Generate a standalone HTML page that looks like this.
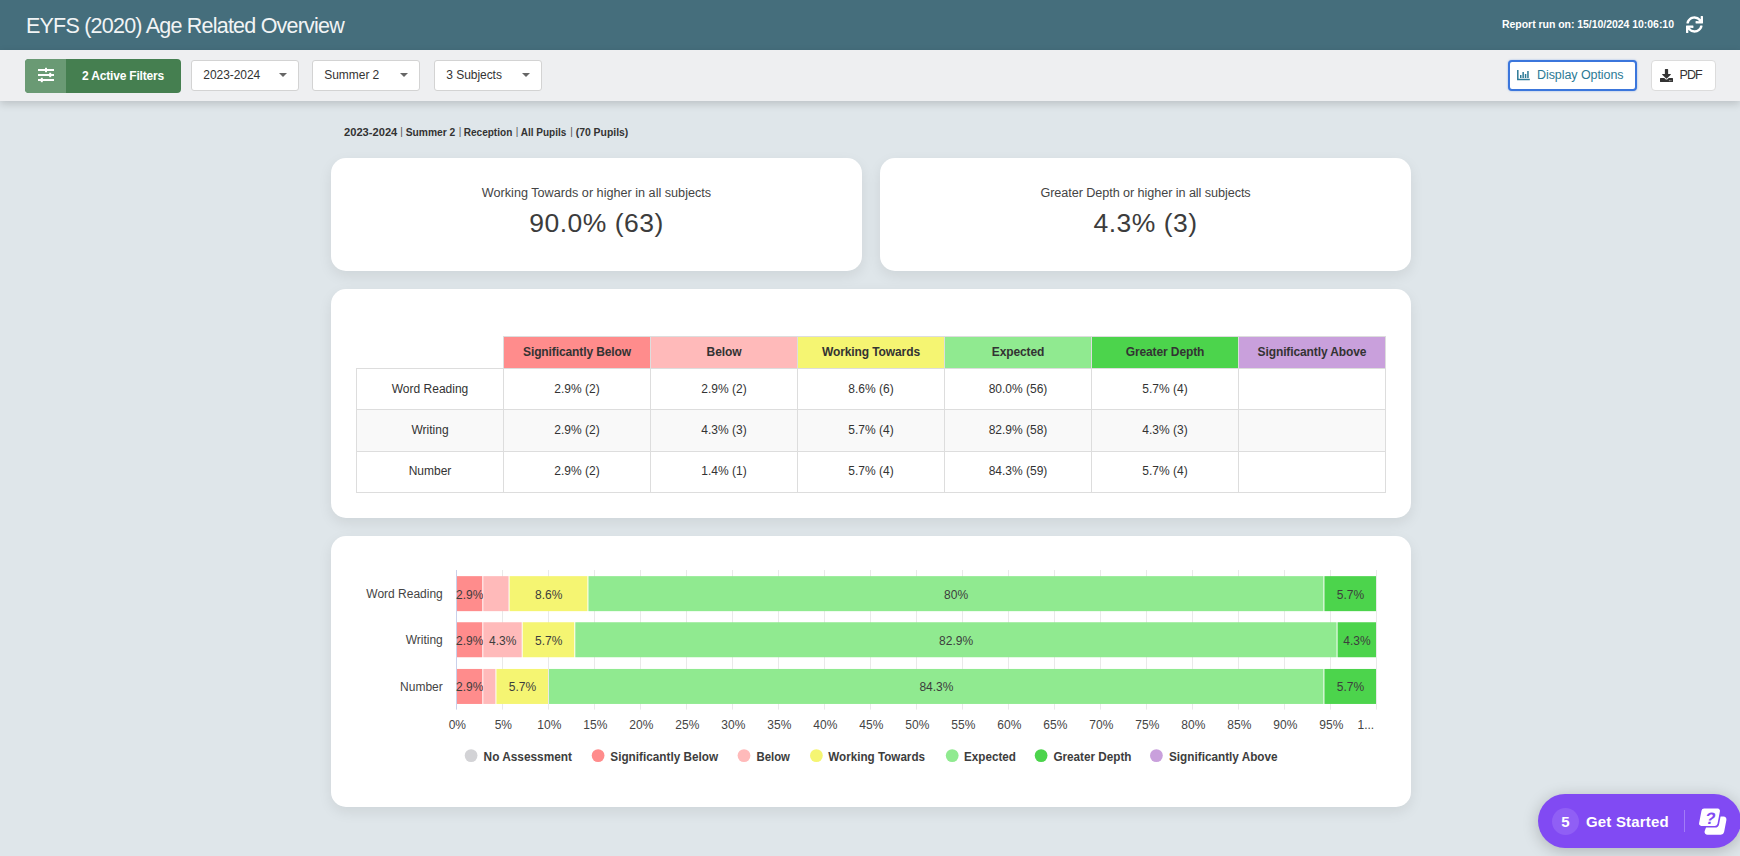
<!DOCTYPE html>
<html lang="en">
<head>
<meta charset="utf-8">
<title>EYFS (2020) Age Related Overview</title>
<style>
*{box-sizing:border-box;margin:0;padding:0}
html,body{width:1740px;height:856px;overflow:hidden}
body{background:#dfe6ea;font-family:"Liberation Sans",sans-serif;color:#333;position:relative}
.abs{position:absolute}
#hdr{position:absolute;left:0;top:0;width:1740px;height:50px;background:#456e7c}
#title{position:absolute;left:26px;top:12px;font-size:21.5px;letter-spacing:-.78px;line-height:28px;color:#fff;white-space:nowrap;font-weight:400;opacity:.93}
#runon{position:absolute;left:1502px;top:17px;font-size:10.5px;letter-spacing:-.04px;line-height:14px;color:#fff;font-weight:700;white-space:nowrap}
#refresh{position:absolute;left:1686px;top:16px;width:17px;height:17px}
#bar{position:absolute;left:0;top:50px;width:1740px;height:51px;background:#eeeff1;box-shadow:0 3px 8px rgba(0,0,0,.16)}
#filt{position:absolute;left:25px;top:59px;width:156px;height:34px;border-radius:4px;background:#457f50;overflow:hidden}
#filt .ic{position:absolute;left:0;top:0;width:41px;height:34px;background:#6a9a74}
#filt .tx{position:absolute;left:57px;top:9px;font-size:12px;letter-spacing:-.18px;line-height:16px;font-weight:700;color:#fff;white-space:nowrap}
.dd{position:absolute;top:60px;width:108px;height:31px;background:#fff;border:1px solid #d3d3d3;border-radius:3px}
.dd span{position:absolute;left:11.3px;top:7px;font-size:12px;letter-spacing:-.05px;line-height:15px;color:#333;white-space:nowrap}
.dd i{position:absolute;left:87px;top:12px;width:0;height:0;border-left:4px solid transparent;border-right:4px solid transparent;border-top:4px solid #666}
#dopt{position:absolute;left:1508px;top:60px;width:129px;height:31px;background:#fff;border:2px solid #3b76dc;border-radius:4px;box-shadow:0 0 2px rgba(59,118,220,.55)}
#dopt span{position:absolute;left:27px;top:6px;font-size:12.5px;letter-spacing:-.07px;line-height:15px;color:#2c7a96;white-space:nowrap}
#pdf{position:absolute;left:1651px;top:60px;width:65px;height:31px;background:#fff;border:1px solid #dcdcdc;border-radius:4px}
#pdf span{position:absolute;left:27.5px;top:7px;font-size:12.5px;letter-spacing:-.9px;line-height:15px;color:#333;white-space:nowrap}
#crumb{position:absolute;left:344px;top:125px;font-size:11px;line-height:14px;font-weight:700;color:#333;white-space:nowrap}
#crumb b{font-weight:400;color:#555}
.card{position:absolute;background:#fff;border-radius:15px;box-shadow:0 5px 14px rgba(0,0,0,.08)}
.kpi .l{position:absolute;left:0;width:100%;top:27px;text-align:center;font-size:12.65px;line-height:16px;color:#444}
.kpi .v{position:absolute;left:0;width:100%;top:46px;text-align:center;font-size:26.5px;letter-spacing:.49px;line-height:38px;color:#3c3c3c}
table{position:absolute;left:356px;top:336px;border-collapse:collapse;table-layout:fixed;width:1029px}
td,th{border:1px solid #ddd;text-align:center;font-size:12px;color:#333;padding:0;width:147px}
th{height:32px;font-weight:700;font-size:12px;letter-spacing:-.11px;padding-bottom:2px}
td{height:41px}
tr.alt td{background:#f9f9f9}
tr.r2 td,tr.r3 td{padding-bottom:2px}
th.e{border:none;background:transparent}
</style>
</head>
<body>
<div id="hdr"></div>
<div id="title">EYFS (2020) Age Related Overview</div>
<div id="runon">Report run on: 15/10/2024 10:06:10</div>
<svg id="refresh" viewBox="0 0 512 512"><path fill="#fff" d="M440.65 12.570l4 82.770A247.160 247.160 0 0 0 255.830 8C134.730 8 33.910 94.920 12.290 209.820A12 12 0 0 0 24.090 224h49.050a12 12 0 0 0 11.670-9.260 175.910 175.910 0 0 1 317-56.940l-101.460-4.860a12 12 0 0 0-12.570 12v47.410a12 12 0 0 0 12 12H500a12 12 0 0 0 12-12V12a12 12 0 0 0-12-12h-47.370a12 12 0 0 0-11.980 12.570zM255.830 432a175.610 175.610 0 0 1-146-77.800l101.800 4.870a12 12 0 0 0 12.570-12v-47.400a12 12 0 0 0-12-12H12a12 12 0 0 0-12 12V500a12 12 0 0 0 12 12h47.350a12 12 0 0 0 12-12.600l-4.150-82.570A247.170 247.170 0 0 0 255.830 504c121.110 0 221.930-86.920 243.550-201.820a12 12 0 0 0-11.800-14.180h-49.050a12 12 0 0 0-11.670 9.260A175.860 175.860 0 0 1 255.830 432z"/></svg>
<div id="bar"></div>
<div id="filt"><div class="ic"><svg width="41" height="34" viewBox="0 0 41 34"><g stroke="#fff" stroke-width="2" fill="none"><path d="M13 11h16M13 16h16M13 21h16"/></g><g fill="#fff"><rect x="20" y="8.800" width="2" height="4.400"/><rect x="24.200" y="13.800" width="2" height="4.400"/><rect x="15.800" y="18.800" width="2" height="4.400"/></g></svg></div><div class="tx">2 Active Filters</div></div>
<div class="dd" style="left:191px"><span>2023-2024</span><i></i></div>
<div class="dd" style="left:312px"><span>Summer 2</span><i></i></div>
<div class="dd" style="left:434px"><span>3 Subjects</span><i></i></div>
<div id="dopt"><svg class="abs" style="left:7px;top:8px" width="13" height="11" viewBox="0 0 13 11"><path d="M.8 0v9.6h12" stroke="#2c7a96" stroke-width="1.5" fill="none"/><g fill="#2c7a96"><rect x="3" y="5" width="1.5" height="3"/><rect x="5.4" y="2" width="1.5" height="6"/><rect x="7.8" y="4" width="1.5" height="4"/><rect x="10.2" y="1" width="1.5" height="7"/></g></svg><span>Display Options</span></div>
<div id="pdf"><svg class="abs" style="left:8px;top:8px" width="13" height="13" viewBox="0 0 512 512"><path fill="#333" d="M216 0h80c13.3 0 24 10.700 24 24v168h87.700c17.800 0 26.700 21.500 14.100 34.100L269.700 378.300c-7.500 7.500-19.800 7.500-27.300 0L90.100 226.100c-12.600-12.600-3.700-34.100 14.100-34.100H192V24c0-13.300 10.700-24 24-24zm296 376v112c0 13.300-10.700 24-24 24H24c-13.300 0-24-10.700-24-24V376c0-13.300 10.700-24 24-24h146.700l49 49c20.100 20.100 52.500 20.100 72.600 0l49-49H488c13.300 0 24 10.700 24 24zm-124 88c0-11-9-20-20-20s-20 9-20 20 9 20 20 20 20-9 20-20zm64 0c0-11-9-20-20-20s-20 9-20 20 9 20 20 20 20-9 20-20z"/></svg><span>PDF</span></div>


<div class="card kpi" style="left:331px;top:158px;width:531px;height:113px"><div class="l">Working Towards or higher in all subjects</div><div class="v">90.0% (63)</div></div>
<div class="card kpi" style="left:880px;top:158px;width:531px;height:113px"><div class="l" style="letter-spacing:-.07px">Greater Depth or higher in all subjects</div><div class="v">4.3% (3)</div></div>

<div class="card" style="left:331px;top:289px;width:1080px;height:229px"></div>
<table>
<tr><th class="e"></th><th style="background:#ff8c8c">Significantly Below</th><th style="background:#ffbaba">Below</th><th style="background:#f5f572">Working Towards</th><th style="background:#90ea90">Expected</th><th style="background:#4cd44c">Greater Depth</th><th style="background:#c9a0dc">Significantly Above</th></tr>
<tr><td>Word Reading</td><td>2.9% (2)</td><td>2.9% (2)</td><td>8.6% (6)</td><td>80.0% (56)</td><td>5.7% (4)</td><td></td></tr>
<tr class="alt r2" style="height:42px"><td>Writing</td><td>2.9% (2)</td><td>4.3% (3)</td><td>5.7% (4)</td><td>82.9% (58)</td><td>4.3% (3)</td><td></td></tr>
<tr class="r3"><td>Number</td><td>2.9% (2)</td><td>1.4% (1)</td><td>5.7% (4)</td><td>84.3% (59)</td><td>5.7% (4)</td><td></td></tr>
</table>

<div class="card" style="left:331px;top:536px;width:1080px;height:271px"></div>
<svg class="abs" style="left:0;top:0" width="1740" height="856" viewBox="0 0 1740 856" font-family="'Liberation Sans',sans-serif">
<text x="344" y="135.9" font-size="11" font-weight="700" fill="#333" textLength="53.3" lengthAdjust="spacingAndGlyphs">2023-2024</text>
<text x="405.7" y="135.9" font-size="11" font-weight="700" fill="#333" textLength="49.6" lengthAdjust="spacingAndGlyphs">Summer 2</text>
<text x="463.7" y="135.9" font-size="11" font-weight="700" fill="#333" textLength="48.6" lengthAdjust="spacingAndGlyphs">Reception</text>
<text x="520.7" y="135.9" font-size="11" font-weight="700" fill="#333" textLength="45.6" lengthAdjust="spacingAndGlyphs">All Pupils</text>
<text x="575.7" y="135.9" font-size="11" font-weight="700" fill="#333" textLength="52.6" lengthAdjust="spacingAndGlyphs">(70 Pupils)</text>
<text x="401.5" y="135.2" font-size="10" fill="#555" text-anchor="middle">|</text>
<text x="460.1" y="135.2" font-size="10" fill="#555" text-anchor="middle">|</text>
<text x="517.1" y="135.2" font-size="10" fill="#555" text-anchor="middle">|</text>
<text x="571.5" y="135.2" font-size="10" fill="#555" text-anchor="middle">|</text>
<path d="M502.5 570.0V709.6 M548.5 570.0V709.6 M594.5 570.0V709.6 M640.5 570.0V709.6 M686.5 570.0V709.6 M732.5 570.0V709.6 M778.5 570.0V709.6 M824.5 570.0V709.6 M870.5 570.0V709.6 M916.5 570.0V709.6 M962.5 570.0V709.6 M1008.5 570.0V709.6 M1054.5 570.0V709.6 M1100.5 570.0V709.6 M1146.5 570.0V709.6 M1192.5 570.0V709.6 M1238.5 570.0V709.6 M1284.5 570.0V709.6 M1330.5 570.0V709.6 M1376.5 570.0V709.6" stroke="#e9e9e9" stroke-width="1" fill="none"/>
<path d="M456.5 570.0V709.6" stroke="#c9d0ea" stroke-width="1" fill="none"/>
<text x="442.8" y="598.2" text-anchor="end" font-size="12" fill="#444">Word Reading</text>
<rect x="457.00" y="576.15" width="25.29" height="35.0" fill="#ff8c8c"/>
<text x="469.8" y="598.9" text-anchor="middle" font-size="12" fill="#3d3d3d">2.9%</text>
<rect x="483.29" y="576.15" width="25.29" height="35.0" fill="#ffbaba"/>
<rect x="509.57" y="576.15" width="77.86" height="35.0" fill="#f5f572"/>
<text x="548.7" y="598.9" text-anchor="middle" font-size="12" fill="#3d3d3d">8.6%</text>
<rect x="588.43" y="576.15" width="735.00" height="35.0" fill="#90ea90"/>
<text x="956.1" y="598.9" text-anchor="middle" font-size="12" fill="#3d3d3d">80%</text>
<rect x="1324.43" y="576.15" width="51.57" height="35.0" fill="#4cd44c"/>
<text x="1350.4" y="598.9" text-anchor="middle" font-size="12" fill="#3d3d3d">5.7%</text>
<text x="442.8" y="644.4" text-anchor="end" font-size="12" fill="#444">Writing</text>
<rect x="457.00" y="622.25" width="25.29" height="35.0" fill="#ff8c8c"/>
<text x="469.8" y="645.0" text-anchor="middle" font-size="12" fill="#3d3d3d">2.9%</text>
<rect x="483.29" y="622.25" width="38.43" height="35.0" fill="#ffbaba"/>
<text x="502.7" y="645.0" text-anchor="middle" font-size="12" fill="#3d3d3d">4.3%</text>
<rect x="522.71" y="622.25" width="51.57" height="35.0" fill="#f5f572"/>
<text x="548.7" y="645.0" text-anchor="middle" font-size="12" fill="#3d3d3d">5.7%</text>
<rect x="575.29" y="622.25" width="761.29" height="35.0" fill="#90ea90"/>
<text x="956.1" y="645.0" text-anchor="middle" font-size="12" fill="#3d3d3d">82.9%</text>
<rect x="1337.57" y="622.25" width="38.43" height="35.0" fill="#4cd44c"/>
<text x="1357.0" y="645.0" text-anchor="middle" font-size="12" fill="#3d3d3d">4.3%</text>
<text x="442.8" y="691.1" text-anchor="end" font-size="12" fill="#444">Number</text>
<rect x="457.00" y="668.95" width="25.29" height="35.0" fill="#ff8c8c"/>
<text x="469.8" y="690.9" text-anchor="middle" font-size="12" fill="#3d3d3d">2.9%</text>
<rect x="483.29" y="668.95" width="12.14" height="35.0" fill="#ffbaba"/>
<rect x="496.43" y="668.95" width="51.57" height="35.0" fill="#f5f572"/>
<text x="522.4" y="690.9" text-anchor="middle" font-size="12" fill="#3d3d3d">5.7%</text>
<rect x="549.00" y="668.95" width="774.43" height="35.0" fill="#90ea90"/>
<text x="936.4" y="690.9" text-anchor="middle" font-size="12" fill="#3d3d3d">84.3%</text>
<rect x="1324.43" y="668.95" width="51.57" height="35.0" fill="#4cd44c"/>
<text x="1350.4" y="690.9" text-anchor="middle" font-size="12" fill="#3d3d3d">5.7%</text>
<text x="457.3" y="728.8" text-anchor="middle" font-size="12" fill="#444">0%</text>
<text x="503.3" y="728.8" text-anchor="middle" font-size="12" fill="#444">5%</text>
<text x="549.3" y="728.8" text-anchor="middle" font-size="12" fill="#444">10%</text>
<text x="595.3" y="728.8" text-anchor="middle" font-size="12" fill="#444">15%</text>
<text x="641.3" y="728.8" text-anchor="middle" font-size="12" fill="#444">20%</text>
<text x="687.3" y="728.8" text-anchor="middle" font-size="12" fill="#444">25%</text>
<text x="733.3" y="728.8" text-anchor="middle" font-size="12" fill="#444">30%</text>
<text x="779.3" y="728.8" text-anchor="middle" font-size="12" fill="#444">35%</text>
<text x="825.3" y="728.8" text-anchor="middle" font-size="12" fill="#444">40%</text>
<text x="871.3" y="728.8" text-anchor="middle" font-size="12" fill="#444">45%</text>
<text x="917.3" y="728.8" text-anchor="middle" font-size="12" fill="#444">50%</text>
<text x="963.3" y="728.8" text-anchor="middle" font-size="12" fill="#444">55%</text>
<text x="1009.3" y="728.8" text-anchor="middle" font-size="12" fill="#444">60%</text>
<text x="1055.3" y="728.8" text-anchor="middle" font-size="12" fill="#444">65%</text>
<text x="1101.3" y="728.8" text-anchor="middle" font-size="12" fill="#444">70%</text>
<text x="1147.3" y="728.8" text-anchor="middle" font-size="12" fill="#444">75%</text>
<text x="1193.3" y="728.8" text-anchor="middle" font-size="12" fill="#444">80%</text>
<text x="1239.3" y="728.8" text-anchor="middle" font-size="12" fill="#444">85%</text>
<text x="1285.3" y="728.8" text-anchor="middle" font-size="12" fill="#444">90%</text>
<text x="1331.3" y="728.8" text-anchor="middle" font-size="12" fill="#444">95%</text>
<text x="1365.8" y="728.8" text-anchor="middle" font-size="12" fill="#444">1...</text>
<circle cx="471.1" cy="755.6" r="6.4" fill="#d3d3d6"/>
<text x="483.6" y="760.5" font-size="12" font-weight="700" fill="#3d3d3d" textLength="88.4" lengthAdjust="spacingAndGlyphs">No Assessment</text>
<circle cx="598.1" cy="755.6" r="6.4" fill="#ff8c8c"/>
<text x="610.3" y="760.5" font-size="12" font-weight="700" fill="#3d3d3d" textLength="107.9" lengthAdjust="spacingAndGlyphs">Significantly Below</text>
<circle cx="744.0" cy="755.6" r="6.4" fill="#ffbaba"/>
<text x="756.4" y="760.5" font-size="12" font-weight="700" fill="#3d3d3d" textLength="33.6" lengthAdjust="spacingAndGlyphs">Below</text>
<circle cx="816.4" cy="755.6" r="6.4" fill="#f5f572"/>
<text x="828.3" y="760.5" font-size="12" font-weight="700" fill="#3d3d3d" textLength="96.7" lengthAdjust="spacingAndGlyphs">Working Towards</text>
<circle cx="952.2" cy="755.6" r="6.4" fill="#90ea90"/>
<text x="964.1" y="760.5" font-size="12" font-weight="700" fill="#3d3d3d" textLength="51.8" lengthAdjust="spacingAndGlyphs">Expected</text>
<circle cx="1041.1" cy="755.6" r="6.4" fill="#4cd44c"/>
<text x="1053.4" y="760.5" font-size="12" font-weight="700" fill="#3d3d3d" textLength="78.1" lengthAdjust="spacingAndGlyphs">Greater Depth</text>
<circle cx="1156.4" cy="755.6" r="6.4" fill="#c9a0dc"/>
<text x="1169" y="760.5" font-size="12" font-weight="700" fill="#3d3d3d" textLength="108.6" lengthAdjust="spacingAndGlyphs">Significantly Above</text>
</svg>

<div class="abs" style="left:1538px;top:794px;width:203px;height:54px;border-radius:27px;background:#814af3;box-shadow:0 3px 16px rgba(0,0,0,.22)"></div>
<div class="abs" style="left:1552px;top:808px;width:27px;height:27px;border-radius:50%;background:#905ff5"></div>
<div class="abs" style="left:1552px;top:808px;width:27px;height:27px;line-height:27px;text-align:center;color:#fff;font-size:15px;font-weight:700;font-family:'Liberation Sans',sans-serif">5</div>
<div class="abs" style="left:1586px;top:811px;line-height:22px;color:#fff;font-size:15px;font-weight:700;white-space:nowrap;font-family:'Liberation Sans',sans-serif;letter-spacing:.18px">Get Started</div>
<div class="abs" style="left:1684px;top:810px;width:1px;height:22px;background:#a27cf7"></div>
<svg class="abs" style="left:1697px;top:806px" width="32" height="32" viewBox="0 0 32 32"><path d="M13.2 10.500h13.300a3 3 0 0 1 2.900 3.600l-2.300 12a3.400 3.400 0 0 1-3.300 2.700H10.500a3 3 0 0 1-2.900-3.600z" fill="#fff"/><path d="M7 1.800h13.800a3 3 0 0 1 2.900 3.600l-2.400 12.600a3.400 3.400 0 0 1-3.300 2.700H4.200a3 3 0 0 1-2.900-3.600l2.400-12.600A3.400 3.400 0 0 1 7 1.800z" fill="#fff" stroke="#814af3" stroke-width="1.600"/><text x="15.6" y="17.600" text-anchor="middle" font-size="16.500" font-weight="700" fill="#814af3" font-family="'Liberation Sans',sans-serif" transform="skewX(-10)">?</text></svg>
</body>
</html>
